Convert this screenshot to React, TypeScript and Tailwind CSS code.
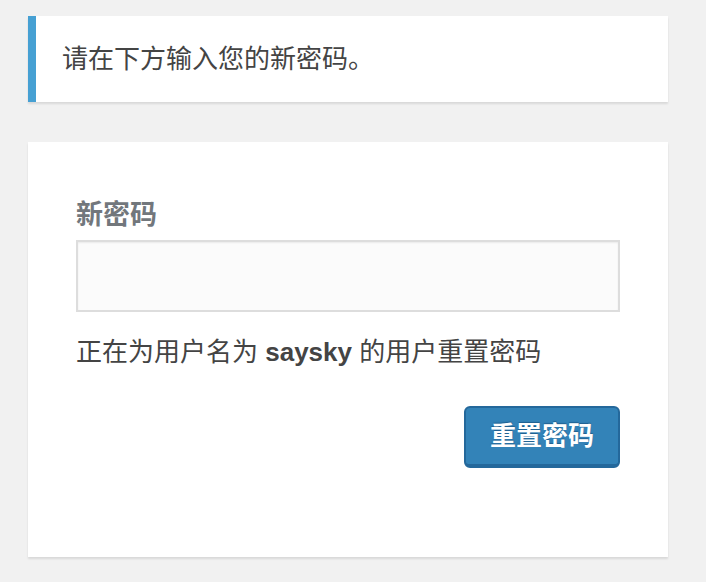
import React from "react";

export default function App() {
  const font = { fontFamily: '"Liberation Sans", "Noto Sans CJK SC", sans-serif' };
  return (
    <div className="min-h-[582px] w-[706px] bg-[#f1f1f1] pt-4 pl-7" style={font}>
      <div className="w-[640px] border-l-[8px] border-[#46a0d3] bg-white pl-[26px] h-[86px] flex items-center shadow-[0_2px_2px_rgba(0,0,0,0.1)]">
        <p className="text-[26px] leading-[38px] text-[#444]">请在下方输入您的新密码。</p>
      </div>
      <div className="mt-10 w-[640px] h-[415px] bg-white px-12 pt-[55px] shadow-[0_2px_2px_rgba(0,0,0,0.1)]">
        <label className="block text-[27px] leading-[36px] font-bold text-[#72777c]">新密码</label>
        <div className="mt-[7px] h-[72px] border-2 border-[#dddddd] bg-[#fbfbfb] shadow-[inset_0_1px_2px_rgba(0,0,0,0.07)]"></div>
        <p className="mt-[20px] text-[26px] leading-[40px] text-[#444]">
          正在为用户名为 <strong className="font-bold">saysky</strong> 的用户重置密码
        </p>
        <div className="mt-[34px] flex justify-end">
          <button className="h-[62px] w-[156px] rounded-[6px] border-2 border-[#24689b] border-b-[4px] bg-[#3383b8] text-[26px] font-bold text-white [text-shadow:0_-1px_1px_#1e5f8f] flex items-center justify-center">
            重置密码
          </button>
        </div>
      </div>
    </div>
  );
}
